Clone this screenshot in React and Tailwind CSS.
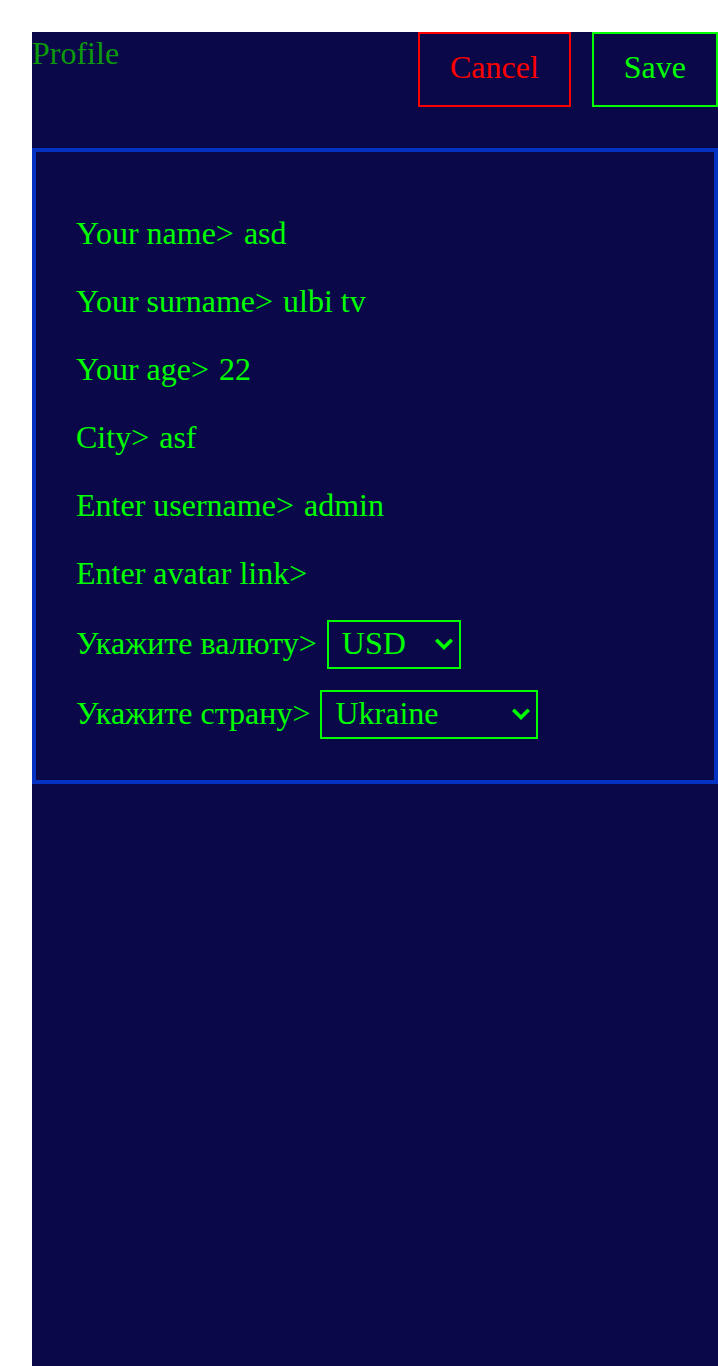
import {useState} from "react";

const fields = [
    {name: "first", label: "Your name>", value: "asd"},
    {name: "lastname", label: "Your surname>", value: "ulbi tv"},
    {name: "age", label: "Your age>", value: "22"},
    {name: "city", label: "City>", value: "asf"},
    {name: "username", label: "Enter username>", value: "admin"},
    {name: "avatar", label: "Enter avatar link>", value: ""},
];

const Chevron = () => (
    <svg
        width="18"
        height="13"
        viewBox="0 0 18 13"
        className="pointer-events-none absolute right-[8px] top-1/2 -translate-y-1/2"
    >
        <path
            d="M2.5 2.5 L9 9 L15.5 2.5"
            fill="none"
            stroke="#00ff00"
            strokeWidth="3.6"
            strokeLinecap="square"
        />
    </svg>
);

const Select = ({value, options, onChange, width}) => (
    <div className={`relative ml-[10px] ${width}`}>
        <select
            value={value}
            onChange={(e) => onChange(e.target.value)}
            className="h-[49px] w-full appearance-none border-2 border-[#00ff00] bg-[#0a0848] pl-[13px] pt-[3px] pb-[5px] text-[32px] leading-[37px] text-[#00ff00] outline-none"
        >
            {options.map((o) => (
                <option key={o} value={o}>
                    {o}
                </option>
            ))}
        </select>
        <Chevron />
    </div>
);

const App = () => {
    const [data, setData] = useState(
        Object.fromEntries(fields.map((f) => [f.name, f.value]))
    );
    const [currency, setCurrency] = useState("USD");
    const [country, setCountry] = useState("Ukraine");

    const handleChange = (e) => {
        const {name, value} = e.target;
        setData((prev) => ({...prev, [name]: value}));
    };

    return (
        <div className="flex h-screen flex-col bg-white pl-8 pt-8 font-['Liberation_Serif','Times_New_Roman',serif]">
            <div className="flex-1 overflow-hidden bg-[#0a0848]">
                <div className="flex h-[75px] items-start">
                    <h1 className="mt-[3px] text-[32px] leading-[37px] text-[#0c990c]">
                        Profile
                    </h1>
                    <div className="ml-auto flex gap-[21px]">
                        <button className="border-2 border-[#ff0000] px-[30px] pt-[15px] pb-[19px] text-[32px] leading-[37px] text-[#ff0000]">
                            Cancel
                        </button>
                        <button className="border-2 border-[#00ff00] px-[30px] pt-[15px] pb-[19px] text-[32px] leading-[37px] text-[#00ff00]">
                            Save
                        </button>
                    </div>
                </div>

                <div className="mt-[41px] flex flex-col border-4 border-[#0433c4] pl-[40px] pt-[47px] pb-[41px] text-[32px] leading-[37px] text-[#00ff00]">
                    {fields.map((f) => (
                        <div key={f.name} className="flex h-[68px] items-center">
                            <span>{f.label}</span>
                            <input
                                name={f.name}
                                value={data[f.name]}
                                onChange={handleChange}
                                className="ml-[10px] w-[300px] bg-transparent text-[32px] leading-[37px] text-[#00ff00] outline-none"
                            />
                        </div>
                    ))}
                    <div className="flex items-baseline pt-[13px]">
                        <span>Укажите валюту&gt;</span>
                        <Select
                            value={currency}
                            onChange={setCurrency}
                            width="w-[134px]"
                            options={["RUB", "EUR", "USD"]}
                        />
                    </div>
                    <div className="mt-[21px] flex items-baseline">
                        <span>Укажите страну&gt;</span>
                        <Select
                            value={country}
                            onChange={setCountry}
                            width="w-[218px]"
                            options={["Armenia", "Russia", "Belarus", "Kazakhstan", "Ukraine"]}
                        />
                    </div>
                </div>
            </div>
        </div>
    );
};

export default App;
